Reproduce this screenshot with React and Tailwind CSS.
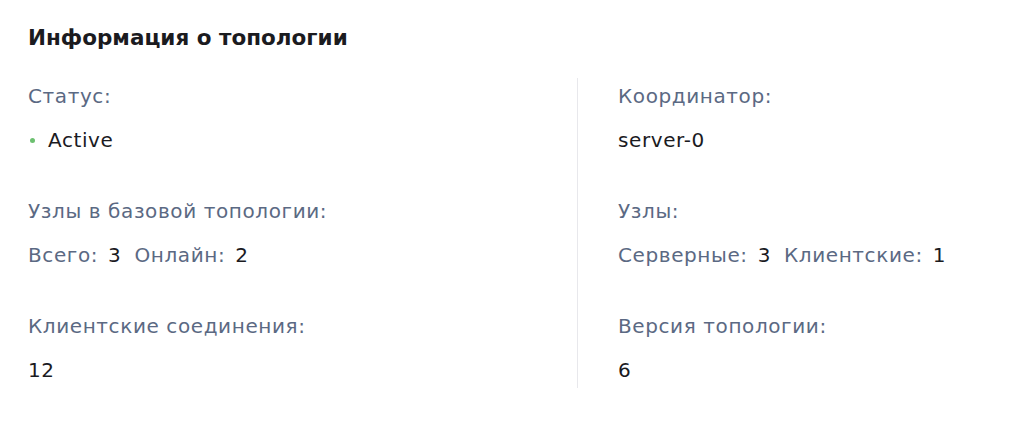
import React from "react";

function Field({ label, children }) {
  return (
    <div className="flex flex-col">
      <div className="text-[20px] leading-[24px] tracking-[0.6px] text-[#5b6983]">{label}</div>
      <div className="mt-[20px] text-[20px] leading-[24px] tracking-[0.6px] text-[#1b1b1f]">{children}</div>
    </div>
  );
}

function Pair({ items }) {
  return (
    <div className="flex items-center gap-[13px]">
      {items.map(([k, v]) => (
        <span key={k} className="flex items-center gap-[10px]">
          <span className="text-[#5b6983]">{k}</span>
          <span>{v}</span>
        </span>
      ))}
    </div>
  );
}

export default function App() {
  return (
    <div className="min-h-screen bg-white font-['DejaVu_Sans',sans-serif]">
      <div className="px-[28px] pt-[24px]">
        <h2 className="text-[21.5px] leading-[28px] font-semibold text-[#1b1b1f]">
          Информация о топологии
        </h2>
        <div className="mt-[26px] flex">
          <div className="w-[549px] flex flex-col gap-[47px] pt-[6px] pb-[6px]">
            <Field label="Статус:">
              <span className="flex items-center gap-[13px] pl-[2px]">
                <span className="w-[5px] h-[5px] rounded-full bg-[#6cc070]" />
                Active
              </span>
            </Field>
            <Field label="Узлы в базовой топологии:">
              <Pair items={[["Всего:", "3"], ["Онлайн:", "2"]]} />
            </Field>
            <Field label="Клиентские соединения:">12</Field>
          </div>
          <div className="border-l border-[#e8e8ec] pl-[40px] flex flex-col gap-[47px] pt-[6px] pb-[6px]">
            <Field label="Координатор:">server-0</Field>
            <Field label="Узлы:">
              <Pair items={[["Серверные:", "3"], ["Клиентские:", "1"]]} />
            </Field>
            <Field label="Версия топологии:">6</Field>
          </div>
        </div>
      </div>
    </div>
  );
}
